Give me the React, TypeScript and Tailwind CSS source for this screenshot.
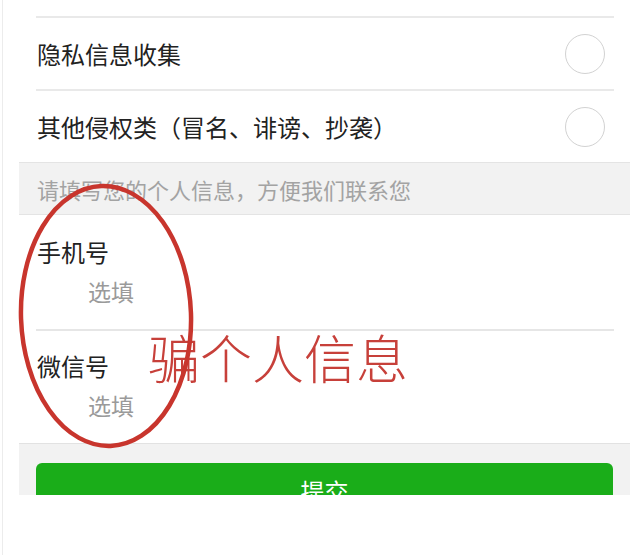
import React from 'react';

const options = ['隐私信息收集', '其他侵权类（冒名、诽谤、抄袭）'];

const fields = ['手机号', '微信号'];

const App = () => {
  return (
    <div className="relative h-[555px] w-[640px] overflow-hidden bg-white pl-[2px] font-['Noto_Sans_CJK_SC',sans-serif]">
      <div className="h-full border-l border-[#ececec] pl-[16px] pr-[10px]">
        <div className="flex h-[495px] flex-col overflow-hidden">
          {/* option list */}
          <div className="shrink-0 pl-[17px] pr-[16px]">
            <div className="h-[16px]" />
            {options.map((label) => (
              <div
                key={label}
                className="flex h-[73px] items-center justify-between border-t-2 border-[#e9e9e9] pl-px pr-[9px]"
              >
                <span className="text-[24px] leading-[36px] text-[#222]">{label}</span>
                <span className="h-[40px] w-[40px] rounded-full border-[1.5px] border-[#d2d2d2]" />
              </div>
            ))}
          </div>

          {/* section title */}
          <div className="flex h-[53px] shrink-0 items-center border-y border-[#e4e4e4] bg-[#f2f2f2] pl-[18px]">
            <span className="text-[22px] leading-[32px] text-[#a3a3a3]">请填写您的个人信息，方便我们联系您</span>
          </div>

          {/* contact fields */}
          <div className="shrink-0 pl-[17px] pr-[16px]">
            {fields.map((label, i) => (
              <div
                key={label}
                className={`flex h-[114px] flex-col pl-px ${i === 0 ? 'pt-[19px]' : 'border-t-2 border-[#e6e6e6] pt-[17px]'}`}
              >
                <span className="text-[24px] leading-[36px] text-[#222]">{label}</span>
                <span className="ml-[51px] mt-[3px] text-[23px] leading-[36px] text-[#9a9a9a]">选填</span>
              </div>
            ))}
          </div>

          {/* submit area */}
          <div className="min-h-0 flex-1 overflow-hidden border-t border-[#e2e2e2] bg-[#f2f2f2] px-[17px] pt-[19px]">
            <button className="flex h-[56px] w-full shrink-0 items-center justify-center rounded-[6px] bg-[#1aad19] text-[24px] text-white">
              提交
            </button>
          </div>
        </div>
      </div>

      {/* annotation over the screenshot */}
      <div className="absolute left-[148px] top-[331px] text-[52px] font-light leading-[52px] text-[#c7403a]">
        骗个人信息
      </div>
      <svg className="pointer-events-none absolute left-0 top-0" width="640" height="555" viewBox="0 0 640 555">
        <ellipse
          cx="106"
          cy="316"
          rx="85"
          ry="130"
          fill="none"
          stroke="#c8352d"
          strokeWidth="4.5"
          transform="rotate(-2 106 316)"
        />
      </svg>
    </div>
  );
};

export default App;
